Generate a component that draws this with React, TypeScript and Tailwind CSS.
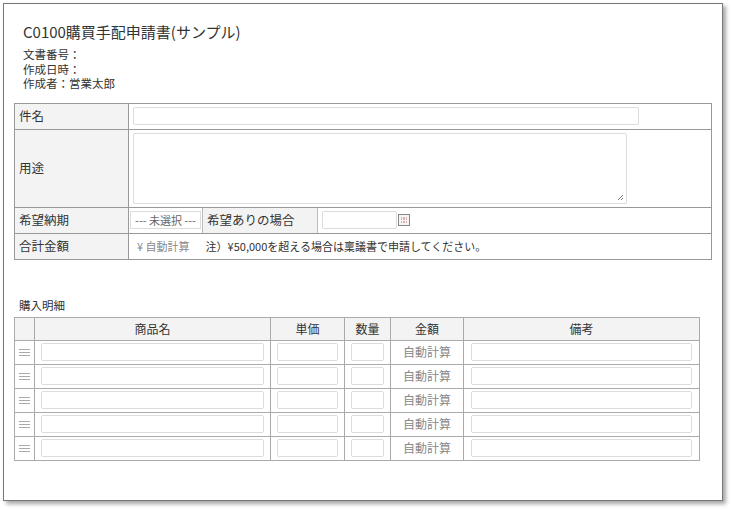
const font = { fontFamily: '"Noto Sans CJK JP", "Liberation Sans", sans-serif' };

function Input({ className = "" }: { className?: string }) {
  return <div className={`h-[18px] rounded-[2px] border border-[#dcdcdc] bg-white ${className}`} />;
}

function Handle() {
  return (
    <div className="flex flex-col gap-[2px] w-[11px] mx-auto">
      <div className="h-px bg-[#aaa]" />
      <div className="h-px bg-[#aaa]" />
      <div className="h-px bg-[#aaa]" />
    </div>
  );
}

export default function App() {
  const rows = [0, 1, 2, 3, 4];
  return (
    <div className="w-[732px] h-[511px] bg-white relative text-[#333]" style={font}>
      <div className="absolute left-[3px] top-[3px] w-[720px] h-[498px] border border-[#777] bg-white shadow-[3px_3px_4px_rgba(0,0,0,0.35)]">
        <div className="pl-[19px] pt-[18px]">
          <div className="text-[15px] leading-[20px]">C0100購買手配申請書(サンプル)</div>
          <div className="mt-[5px] text-[11.5px] leading-[14.5px]">
            <div>文書番号：</div>
            <div>作成日時：</div>
            <div>作成者：営業太郎</div>
          </div>
        </div>

        <table className="ml-[10px] mt-[12px] w-[698px] border-collapse text-[12.5px]">
          <tbody>
            <tr className="h-[26px]">
              <td className="w-[114px] border border-[#999] bg-[#f3f3f3] px-[4px]">件名</td>
              <td className="border border-[#999] pl-[4px]"><Input className="w-[506px]" /></td>
            </tr>
            <tr className="h-[78px]">
              <td className="border border-[#999] bg-[#f3f3f3] px-[4px]">用途</td>
              <td className="border border-[#999] pl-[4px]">
                <div className="relative h-[71px] w-[494px] rounded-[2px] border border-[#dcdcdc]">
                  <svg className="absolute right-[2px] bottom-[2px]" width="7" height="7" viewBox="0 0 7 7">
                    <path d="M6 1L1 6M6 4L4 6" stroke="#777" strokeWidth="1" />
                  </svg>
                </div>
              </td>
            </tr>
            <tr className="h-[26px]">
              <td className="border border-[#999] bg-[#f3f3f3] px-[4px]">希望納期</td>
              <td className="border border-[#999] p-0">
                <div className="flex items-stretch h-[25px]">
                  <div className="flex items-center pl-[1px] w-[73px]">
                    <div className="h-[18px] w-[71px] border border-[#dcdcdc] text-[11px] text-[#666] flex items-center justify-center whitespace-nowrap">--- 未選択 ---</div>
                  </div>
                  <div className="w-[116px] bg-[#f3f3f3] border-l border-r border-[#bbb] flex items-center px-[4px]">希望ありの場合</div>
                  <div className="flex items-center pl-[4px] gap-[1px]">
                    <Input className="w-[75px]" />
                    <div className="w-[12px] h-[12px] border border-[#888] bg-[#f5f5f5] grid grid-cols-3 gap-px p-[2px]">
                      {[...Array(6)].map((_, i) => <div key={i} className="bg-[#e0b0b0]" />)}
                    </div>
                  </div>
                </div>
              </td>
            </tr>
            <tr className="h-[26px]">
              <td className="border border-[#999] bg-[#f3f3f3] px-[4px]">合計金額</td>
              <td className="border border-[#999] pl-[8px] text-[11px]">
                <span className="text-[#888]">¥ 自動計算</span>
                <span className="ml-[16px]">注）¥50,000を超える場合は稟議書で申請してください。</span>
              </td>
            </tr>
          </tbody>
        </table>

        <div className="ml-[15px] mt-[37px] text-[11.5px]">購入明細</div>
        <table className="ml-[10px] mt-[3px] w-[686px] border-collapse text-[12px]">
          <thead>
            <tr className="h-[23px] bg-[#f3f3f3]">
              <th className="w-[20px] border border-[#aaa] font-normal" />
              <th className="w-[236px] border border-[#aaa] font-normal">商品名</th>
              <th className="w-[74px] border border-[#aaa] font-normal">単価</th>
              <th className="w-[46px] border border-[#aaa] font-normal">数量</th>
              <th className="w-[73px] border border-[#aaa] font-normal">金額</th>
              <th className="border border-[#aaa] font-normal">備考</th>
            </tr>
          </thead>
          <tbody>
            {rows.map((r) => (
              <tr key={r} className="h-[24px]">
                <td className="border border-[#aaa]"><Handle /></td>
                <td className="border border-[#aaa] px-[6px]"><Input /></td>
                <td className="border border-[#aaa] px-[6px]"><Input /></td>
                <td className="border border-[#aaa] px-[6px]"><Input /></td>
                <td className="border border-[#aaa] text-center text-[#888]">自動計算</td>
                <td className="border border-[#aaa] px-[7px]"><Input /></td>
              </tr>
            ))}
          </tbody>
        </table>
      </div>
    </div>
  );
}
